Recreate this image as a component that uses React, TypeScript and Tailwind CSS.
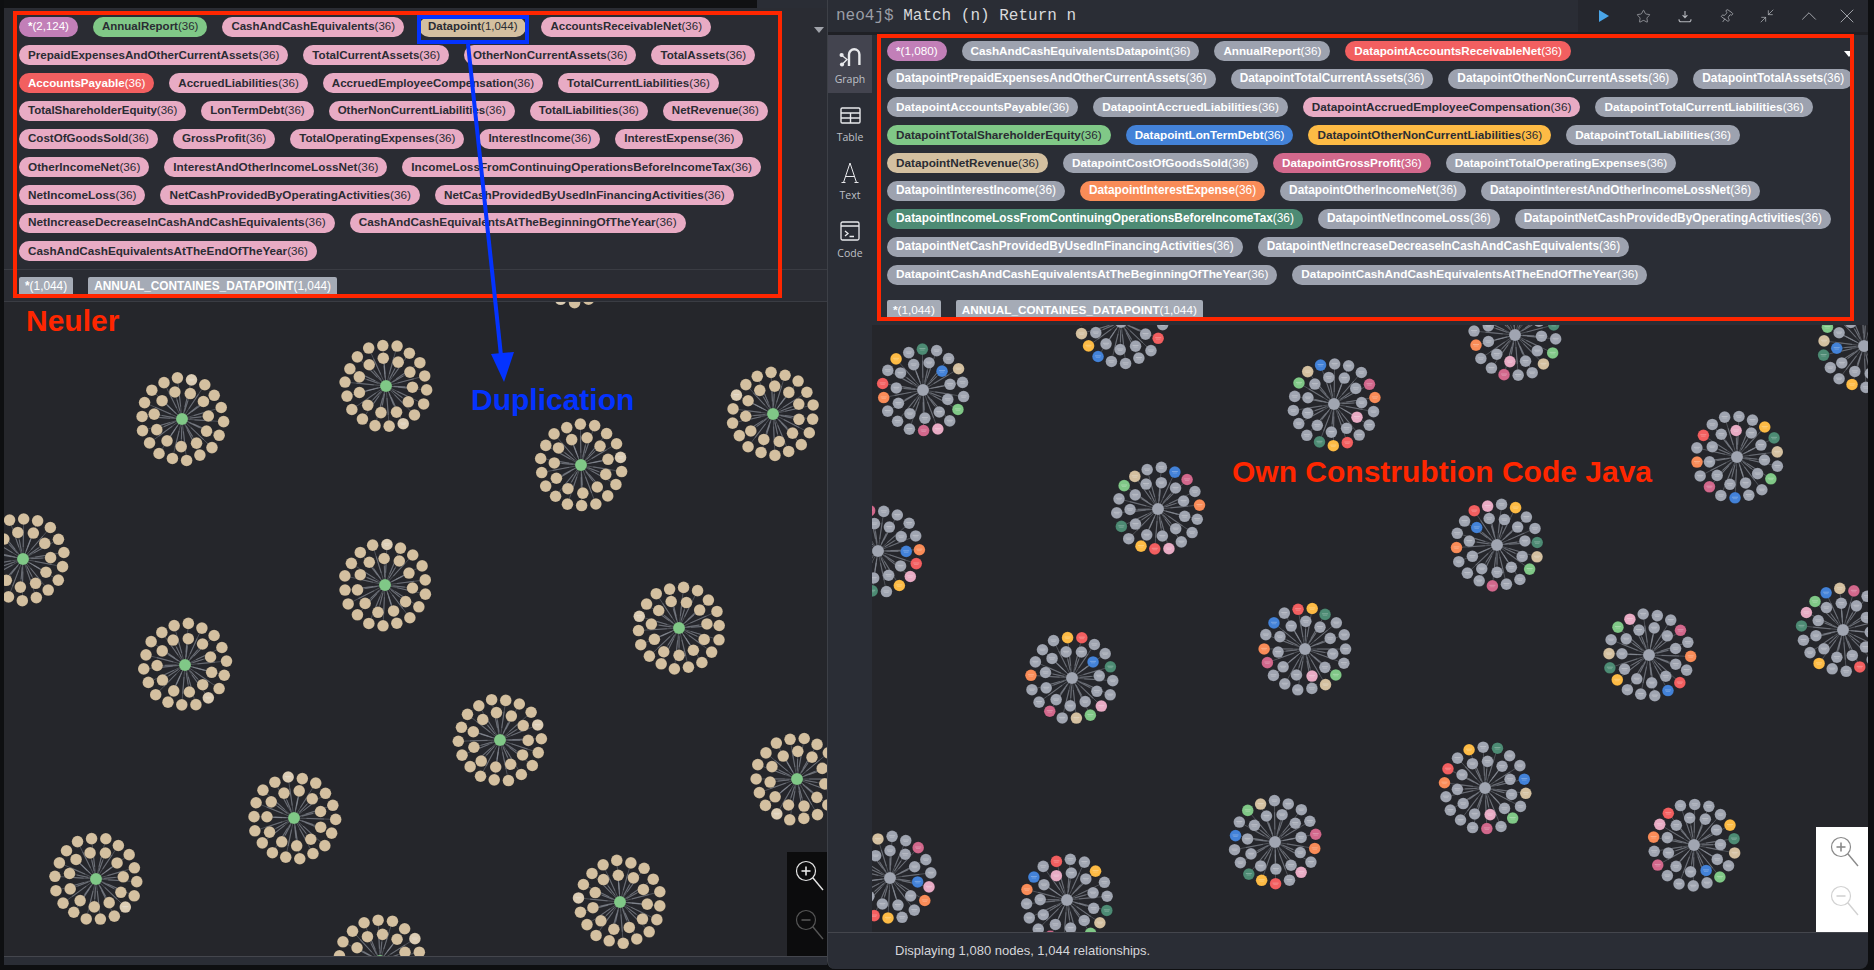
import React from "react";
import { Star, Pin, Minimize2, ChevronUp, X } from "lucide-react";

const C = {
  purple: "bg-[#c27fb8] text-white",
  green: "bg-[#80c887] text-[#2a2c33]",
  pink: "bg-[#e8abc4] text-[#2a2c33]",
  tan: "bg-[#d4c0a0] text-[#2a2c33]",
  red: "bg-[#f25f60] text-white",
  gray: "bg-[#9da2af] text-white",
  blue: "bg-[#4382d8] text-white",
  yellow: "bg-[#fdbb45] text-[#2a2c33]",
  rose: "bg-[#d2688c] text-white",
  orange: "bg-[#f98c58] text-white",
  teal: "bg-[#4d8b74] text-white",
};
type Tone = keyof typeof C;
type P = [string, string, Tone?];

const leftSizes = ["text-[11.5px]", "text-[11.63px]", "text-[11.6px]", "text-[11.5px]", "text-[11.58px]", "text-[11.75px]", "text-[11.75px]", "text-[11.8px]", "text-[11.7px]"];
const rightSizes = ["text-[11.68px]", "text-[11.85px]", "text-[11.78px]", "text-[11.7px]", "text-[11.75px]", "text-[11.85px]", "text-[11.85px]", "text-[11.85px]", "text-[11.8px]"];

const leftRows: P[][] = [
  [["*", "(2,124)", "purple"], ["AnnualReport", "(36)", "green"], ["CashAndCashEquivalents", "(36)"], ["Datapoint", "(1,044)", "tan"], ["AccountsReceivableNet", "(36)"]],
  [["PrepaidExpensesAndOtherCurrentAssets", "(36)"], ["TotalCurrentAssets", "(36)"], ["OtherNonCurrentAssets", "(36)"], ["TotalAssets", "(36)"]],
  [["AccountsPayable", "(36)", "red"], ["AccruedLiabilities", "(36)"], ["AccruedEmployeeCompensation", "(36)"], ["TotalCurrentLiabilities", "(36)"]],
  [["TotalShareholderEquity", "(36)"], ["LonTermDebt", "(36)"], ["OtherNonCurrentLiabilities", "(36)"], ["TotalLiabilities", "(36)"], ["NetRevenue", "(36)"]],
  [["CostOfGoodsSold", "(36)"], ["GrossProfit", "(36)"], ["TotalOperatingExpenses", "(36)"], ["InterestIncome", "(36)"], ["InterestExpense", "(36)"]],
  [["OtherIncomeNet", "(36)"], ["InterestAndOtherIncomeLossNet", "(36)"], ["IncomeLossFromContinuingOperationsBeforeIncomeTax", "(36)"]],
  [["NetIncomeLoss", "(36)"], ["NetCashProvidedByOperatingActivities", "(36)"], ["NetCashProvidedByUsedInFinancingActivities", "(36)"]],
  [["NetIncreaseDecreaseInCashAndCashEquivalents", "(36)"], ["CashAndCashEquivalentsAtTheBeginningOfTheYear", "(36)"]],
  [["CashAndCashEquivalentsAtTheEndOfTheYear", "(36)"]],
];

const rightRows: P[][] = [
  [["*", "(1,080)", "purple"], ["CashAndCashEquivalentsDatapoint", "(36)", "gray"], ["AnnualReport", "(36)", "gray"], ["DatapointAccountsReceivableNet", "(36)", "red"]],
  [["DatapointPrepaidExpensesAndOtherCurrentAssets", "(36)", "gray"], ["DatapointTotalCurrentAssets", "(36)", "gray"], ["DatapointOtherNonCurrentAssets", "(36)", "gray"], ["DatapointTotalAssets", "(36)", "gray"]],
  [["DatapointAccountsPayable", "(36)", "gray"], ["DatapointAccruedLiabilities", "(36)", "gray"], ["DatapointAccruedEmployeeCompensation", "(36)", "pink"], ["DatapointTotalCurrentLiabilities", "(36)", "gray"]],
  [["DatapointTotalShareholderEquity", "(36)", "green"], ["DatapointLonTermDebt", "(36)", "blue"], ["DatapointOtherNonCurrentLiabilities", "(36)", "yellow"], ["DatapointTotalLiabilities", "(36)", "gray"]],
  [["DatapointNetRevenue", "(36)", "tan"], ["DatapointCostOfGoodsSold", "(36)", "gray"], ["DatapointGrossProfit", "(36)", "rose"], ["DatapointTotalOperatingExpenses", "(36)", "gray"]],
  [["DatapointInterestIncome", "(36)", "gray"], ["DatapointInterestExpense", "(36)", "orange"], ["DatapointOtherIncomeNet", "(36)", "gray"], ["DatapointInterestAndOtherIncomeLossNet", "(36)", "gray"]],
  [["DatapointIncomeLossFromContinuingOperationsBeforeIncomeTax", "(36)", "teal"], ["DatapointNetIncomeLoss", "(36)", "gray"], ["DatapointNetCashProvidedByOperatingActivities", "(36)", "gray"]],
  [["DatapointNetCashProvidedByUsedInFinancingActivities", "(36)", "gray"], ["DatapointNetIncreaseDecreaseInCashAndCashEquivalents", "(36)", "gray"]],
  [["DatapointCashAndCashEquivalentsAtTheBeginningOfTheYear", "(36)", "gray"], ["DatapointCashAndCashEquivalentsAtTheEndOfTheYear", "(36)", "gray"]],
];

function PillRows({ rows, sizes }: { rows: P[][]; sizes: string[] }) {
  return (
    <>
      {rows.map((row, i) => (
        <div key={i} className="mb-2 flex h-5 gap-[15px]">
          {row.map(([label, count, tone]) => (
            <span key={label} className={`flex h-5 items-center whitespace-nowrap rounded-[10px] px-[9px] ${sizes[i]} ${C[tone ?? "pink"]}`}>
              <b className="font-bold">{label}</b>
              <span>{count}</span>
            </span>
          ))}
        </div>
      ))}
    </>
  );
}

function RelRow({ size }: { size: string }) {
  return (
    <div className="flex gap-[15px]">
      <span className={`flex h-5 items-center rounded-t-[2px] bg-[#a5abb6] px-[6px] text-white ${size}`}><b>*</b>(1,044)</span>
      <span className={`flex h-5 items-center rounded-t-[2px] bg-[#a5abb6] px-[6px] text-white ${size}`}><b>ANNUAL_CONTAINES_DATAPOINT</b>(1,044)</span>
    </div>
  );
}

const HEX = ["#f25f60", "#e8abc4", "#80c887", "#4382d8", "#fdbb45", "#d4c0a0", "#d2688c", "#f98c58", "#4d8b74"];

function Cluster({ cx, cy, seed, mode }: { cx: number; cy: number; seed: number; mode: "left" | "right" }) {
  const nodes: { x: number; y: number; fill: string; mark: boolean }[] = [];
  const total = 29;
  const colored: Record<number, string> = {};
  HEX.forEach((c, i) => {
    const range = i === 1 || i === 3 ? total : 18;
    let slot = (seed * 7 + i * 5 + ((seed * (i + 3)) % 5)) % range;
    while (colored[slot]) slot = (slot + 1) % range;
    colored[slot] = c;
  });
  for (let i = 0; i < total; i++) {
    const outer = i < 18;
    const n = outer ? 18 : 11;
    const k = outer ? i : i - 18;
    const a = (k / n) * Math.PI * 2 + seed * 0.73 + (outer ? 0 : 0.14);
    const j = ((seed * 31 + i * 17) % 7) / 3.5 - 1;
    const r = (outer ? 41 : 27.5) + j;
    const x = cx + Math.cos(a) * r;
    const y = cy + Math.sin(a) * r;
    const fill = mode === "left" ? (i === (seed * 5) % 18 ? "#dccdb5" : "#d4c0a0") : colored[i] ?? "#a0a5b1";
    nodes.push({ x, y, fill, mark: mode === "right" || i === (seed * 5) % 18 });
  }
  return (
    <g>
      {nodes.map((n, i) => (
        <g key={i}>
          <line x1={cx} y1={cy} x2={n.x} y2={n.y} stroke="#a5abb6" strokeWidth={0.6} opacity={0.55} />
          <line x1={cx + (n.x - cx) * 0.3} y1={cy + (n.y - cy) * 0.3} x2={cx + (n.x - cx) * 0.72} y2={cy + (n.y - cy) * 0.72} stroke="#8c909a" strokeWidth={1.2} opacity={0.45} />
        </g>
      ))}
      {nodes.map((n, i) => (
        <g key={i}>
          <circle cx={n.x} cy={n.y} r={5.8} fill={n.fill} stroke="#00000033" strokeWidth={0.5} />
          {n.mark && (
            <>
              <line x1={n.x - 3} y1={n.y - 0.6} x2={n.x + 3} y2={n.y - 0.6} stroke="#ffffff" strokeOpacity={0.4} strokeWidth={0.7} />
              <line x1={n.x - 2.2} y1={n.y + 0.9} x2={n.x + 2.2} y2={n.y + 0.9} stroke="#ffffff" strokeOpacity={0.3} strokeWidth={0.7} />
            </>
          )}
        </g>
      ))}
      <circle cx={cx} cy={cy} r={6} fill={mode === "left" ? "#80c887" : "#a0a5b1"} stroke="#00000033" strokeWidth={0.5} />
    </g>
  );
}

const leftCenters = [
  [182, 420], [386, 387], [773, 415], [581, 466], [23, 560], [385, 586], [185, 666], [679, 629], [500, 741], [797, 780], [294, 819], [96, 880], [620, 903], [380, 962], [574, 262],
];
const rightCenters = [
  [1121, 322], [1515, 335], [1864, 346], [923, 390], [1334, 404], [1737, 457], [1158, 509], [1497, 545], [878, 551], [1305, 649], [1649, 655], [1072, 678], [1843, 630], [1485, 788], [1275, 842], [1694, 845], [890, 878], [1067, 900],
];

function Canvas({ centers, ox, oy, mode }: { centers: number[][]; ox: number; oy: number; mode: "left" | "right" }) {
  return (
    <svg className="block h-full w-full">
      {centers.map(([x, y], i) => (
        <Cluster key={i} cx={x - ox} cy={y - oy} seed={i + 2} mode={mode} />
      ))}
    </svg>
  );
}

function Magnifier({ plus, color }: { plus: boolean; color: string }) {
  return (
    <svg width="36" height="36" viewBox="0 0 36 36" fill="none" stroke={color} strokeWidth="1.2">
      <circle cx="14" cy="14" r="9.5" />
      <line x1="20.8" y1="20.8" x2="31" y2="33" strokeWidth="1.4" />
      <line x1="9.5" y1="14" x2="18.5" y2="14" strokeWidth="1.6" />
      {plus && <line x1="14" y1="9.5" x2="14" y2="18.5" strokeWidth="1.6" />}
    </svg>
  );
}

function SideItem({ label, active, children }: { label: string; active?: boolean; children: React.ReactNode }) {
  return (
    <div className={`flex flex-col items-center ${active ? "h-[58px] bg-[#43444f] pt-[10px]" : "h-[58px] pt-[10px]"}`}>
      <div className="flex h-[24px] items-center justify-center text-[#e8e9ec]">{children}</div>
      <span className="mt-[3px] font-['Open_Sans',sans-serif] text-[10.5px] leading-[14px] text-[#bfc1c7]">{label}</span>
    </div>
  );
}

export default function App() {
  return (
    <div className="relative flex h-[970px] w-[1874px] overflow-hidden bg-[#0e0f11] font-['Liberation_Sans',sans-serif]">
      {/* Neuler browser behind */}
      <div className="flex w-[827px] shrink-0 flex-col pl-[4px]">
        <div className="flex h-2 shrink-0">
          <div className="w-[753px] bg-[#101113]" />
          <div className="flex-1 bg-[#2a2d35]" />
        </div>
        <div className="h-[262px] shrink-0 border-b border-[#3a3c43] bg-[#2a2c33] pl-[15px] pt-[9px]">
          <PillRows rows={leftRows} sizes={leftSizes} />
        </div>
        <div className="h-[32px] shrink-0 border-b border-[#3a3c43] bg-[#2a2c33] pl-[15px] pt-[7px]">
          <RelRow size="text-[11.85px]" />
        </div>
        <div className="relative flex-1 overflow-hidden bg-[#25262b]">
          <Canvas centers={leftCenters} ox={4} oy={303} mode="left" />
          <div className="absolute bottom-0 right-0 flex h-[104px] w-[40px] flex-col items-center gap-[13px] bg-[#0c0c0d] pl-[6px] pt-[5px]">
            <Magnifier plus color="#e6e6e6" />
            <Magnifier plus={false} color="#555555" />
          </div>
        </div>
        <div className="h-[9px] shrink-0 border-t border-[#44464d] bg-[#2a2d35]" />
        <div className="h-[5px] shrink-0 bg-[#0e0f11]" />
      </div>

      {/* Neo4j Browser frame */}
      <div className="flex h-[969px] w-[1041px] shrink-0 flex-col overflow-hidden rounded-b-[8px] border-l border-[#3d4047] bg-[#2a2d35]">
        <div className="flex h-[32px] shrink-0">
          <div className="flex flex-1 items-center pl-2 font-['Liberation_Mono',monospace] text-[16px] text-[#d8d9dc]">
            <span className="text-[#9b9ea6]">neo4j$</span>
            <span className="ml-[9.6px]">Match (n) Return n</span>
          </div>
          <div className="flex w-[290px] items-center bg-[#25272e] pl-[19px] text-[#b4b6bc]">
            <div className="flex w-[39px] justify-start">
              <svg width="14" height="14" viewBox="0 0 14 14"><path d="M2 1l10 6-10 6z" fill="#4aa5e8" /></svg>
            </div>
            <div className="flex w-[42px]"><Star size={15} strokeWidth={1.1} /></div>
            <div className="flex w-[41px]">
              <svg width="14" height="13" viewBox="0 0 14 13" fill="none" stroke="currentColor" strokeWidth="1.1"><path d="M7 1v6.5M4.6 5.2L7 7.6l2.4-2.4M1 9.2c0 1.6.7 2.6 1.8 2.6h8.4c1.1 0 1.8-1 1.8-2.6" /></svg>
            </div>
            <div className="flex w-[40px]"><Pin size={15} strokeWidth={1.1} className="rotate-[35deg]" /></div>
            <div className="flex w-[37px]"><Minimize2 size={16} strokeWidth={1.1} /></div>
            <div className="flex w-[39px]"><ChevronUp size={26} strokeWidth={0.8} /></div>
            <div className="flex"><X size={24} strokeWidth={0.85} /></div>
          </div>
        </div>
        <div className="h-[3px] shrink-0 bg-[#1f2025]" />
        <div className="flex min-h-0 flex-1">
          <div className="w-[44px] shrink-0 bg-[#2a2d35]">
            <SideItem label="Graph" active>
              <svg width="24" height="24" viewBox="0 0 24 24" fill="none" stroke="currentColor">
                <path d="M11 21V9.5a5.2 5.2 0 0 1 10.4 0V20" strokeWidth="2.4" />
                <circle cx="3.6" cy="10" r="2.1" fill="currentColor" stroke="none" />
                <circle cx="4" cy="19.5" r="2.1" fill="currentColor" stroke="none" />
                <path d="M4 10.5l5 4-5 5" strokeWidth="1.4" />
              </svg>
            </SideItem>
            <SideItem label="Table">
              <svg width="21" height="17" viewBox="0 0 21 17" fill="none" stroke="currentColor" strokeWidth="1.4">
                <rect x="1" y="1" width="19" height="15" rx="1.2" />
                <path d="M1 6h19M1 11h19M10.5 6v10" />
              </svg>
            </SideItem>
            <SideItem label="Text">
              <svg width="18" height="22" viewBox="0 0 18 22" fill="none" stroke="currentColor" strokeWidth="1">
                <path d="M9 1L2.5 20.5M9 1l6.5 19.5M4.6 14.5h8.8M0.5 20.5h4M13.5 20.5h4" />
              </svg>
            </SideItem>
            <SideItem label="Code">
              <svg width="20" height="20" viewBox="0 0 20 20" fill="none" stroke="currentColor" strokeWidth="1.3">
                <rect x="1" y="1" width="18" height="18" rx="1.5" />
                <path d="M1 5h18M5 10l3 2.5L5 15M9.5 15.5H14" />
              </svg>
            </SideItem>
          </div>
          <div className="flex min-w-0 flex-1 flex-col">
            <div className="h-[290px] shrink-0 pl-[15px] pt-[6px]">
              <PillRows rows={rightRows} sizes={rightSizes} />
              <div className="pt-[7px]"><RelRow size="text-[11.75px]" /></div>
            </div>
            <div className="relative flex-1 overflow-hidden bg-[#25262b]">
              <Canvas centers={rightCenters} ox={872} oy={325} mode="right" />
              <div className="absolute bottom-0 right-0 flex h-[105px] w-[52px] flex-col items-center gap-[13px] bg-white pl-[6px] pt-[6px]">
                <Magnifier plus color="#8a8a8a" />
                <Magnifier plus={false} color="#d2d2d2" />
              </div>
            </div>
          </div>
        </div>
        <div className="flex h-[37px] shrink-0 items-center border-t border-[#44464d] pl-[67px] text-[13px] text-[#d5d6da]">
          Displaying 1,080 nodes, 1,044 relationships.
        </div>
      </div>

      {/* small collapse triangles on top of the pill areas */}
      <div className="absolute left-[814px] top-[27px] h-0 w-0 border-x-[5px] border-t-[6px] border-x-transparent border-t-[#a0a3aa]" />
      <div className="absolute left-[1844px] top-[51px] h-0 w-0 border-x-[5px] border-t-[6px] border-x-transparent border-t-white" />

      {/* annotations */}
      <div className="pointer-events-none absolute left-[13px] top-[11px] h-[287px] w-[769px] border-[4px] border-[#ff2600]" />
      <div className="pointer-events-none absolute left-[877px] top-[34px] h-[287px] w-[977px] border-[4px] border-[#ff2600]" />
      <div className="pointer-events-none absolute left-[417px] top-[15px] h-[29px] w-[112px] border-[4px] border-[#0433ff]" />
      <svg className="pointer-events-none absolute left-[440px] top-[40px]" width="90" height="350" viewBox="0 0 90 350">
        <line x1="28" y1="4" x2="62" y2="325" stroke="#0433ff" strokeWidth="4" />
        <path d="M51 314L74 312L64 342z" fill="#0433ff" />
      </svg>
      <span className="absolute left-[26px] top-[304px] text-[30px] font-bold leading-[34px] text-[#ff2600]">Neuler</span>
      <span className="absolute left-[471px] top-[383px] text-[30px] font-bold leading-[34px] text-[#0433ff]">Duplication</span>
      <span className="absolute left-[1232px] top-[455px] text-[30px] font-bold leading-[34px] text-[#ff2600]">Own Construbtion Code Java</span>
    </div>
  );
}
